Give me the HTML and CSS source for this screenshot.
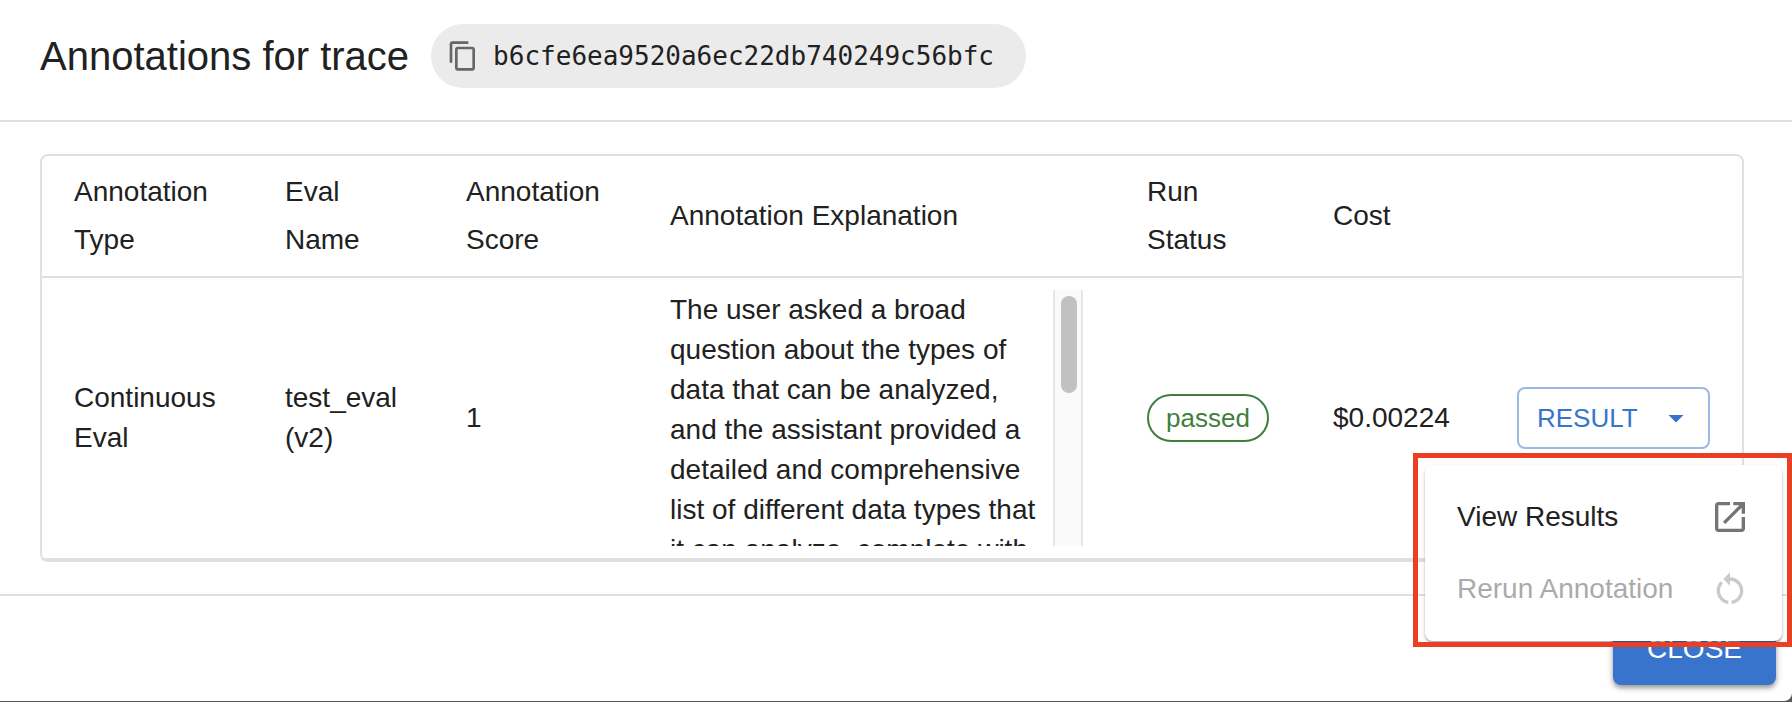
FILE: index.html
```html
<!DOCTYPE html>
<html lang="en">
<head>
    <meta charset="UTF-8">
    <meta name="viewport" content="width=device-width, initial-scale=1.0">
    <title>Annotations for trace</title>
    <link rel="stylesheet" href="styles.css">
</head>
<body>
    <div class="dialog" role="dialog" aria-labelledby="dialog-title">
        <header class="dialog-header">
            <h1 class="dialog-title" id="dialog-title">Annotations for trace</h1>
            <button class="trace-id" type="button">
                <svg class="copy-icon" viewBox="0 0 24 24" aria-hidden="true"><path d="M16 1H4c-1.1 0-2 .9-2 2v14h2V3h12V1zm3 4H8c-1.1 0-2 .9-2 2v14c0 1.1.9 2 2 2h11c1.1 0 2-.9 2-2V7c0-1.1-.9-2-2-2zm0 16H8V7h11v14z"/></svg>
                <span>b6cfe6ea9520a6ec22db740249c56bfc</span>
            </button>
        </header>

        <main class="dialog-content">
            <div class="table-box">
                <table class="annotations">
                    <colgroup>
                        <col class="col-type">
                        <col class="col-eval">
                        <col class="col-score">
                        <col>
                        <col class="col-status">
                        <col class="col-cost">
                        <col class="col-action">
                    </colgroup>
                    <thead>
                        <tr>
                            <th>Annotation Type</th>
                            <th>Eval<br>Name</th>
                            <th>Annotation Score</th>
                            <th>Annotation Explanation</th>
                            <th>Run<br>Status</th>
                            <th>Cost</th>
                            <th></th>
                        </tr>
                    </thead>
                    <tbody>
                        <tr>
                            <td>Continuous Eval</td>
                            <td>test_eval (v2)</td>
                            <td>1</td>
                            <td>
                                <div class="explanation">
                                    <p class="explanation-text">The user asked a broad question about the types of data that can be analyzed, and the assistant provided a detailed and comprehensive list of different data types that it can analyze, complete with</p>
                                    <div class="scroll-track"><div class="scroll-thumb"></div></div>
                                </div>
                            </td>
                            <td><span class="chip">passed</span></td>
                            <td>$0.00224</td>
                            <td>
                                <div class="action">
                                    <button class="result-button" type="button" aria-haspopup="menu" aria-expanded="true">
                                        RESULT
                                        <svg class="caret-icon" viewBox="0 0 24 24" aria-hidden="true"><path d="M7 10l5 5 5-5z"/></svg>
                                    </button>
                                    <div class="menu-frame">
                                        <div class="menu" role="menu">
                                            <button class="menu-item" type="button" role="menuitem">
                                                View Results
                                                <svg class="menu-icon" viewBox="0 0 24 24" aria-hidden="true"><path d="M19 19H5V5h7V3H5c-1.11 0-2 .9-2 2v14c0 1.1.89 2 2 2h14c1.1 0 2-.9 2-2v-7h-2v7zM14 3v2h3.59l-9.83 9.83 1.41 1.41L19 6.41V10h2V3h-7z"/></svg>
                                            </button>
                                            <button class="menu-item" type="button" role="menuitem" disabled>
                                                Rerun Annotation
                                                <svg class="menu-icon" viewBox="0 0 24 24" aria-hidden="true"><path d="M12 5V2L8 6l4 4V7c3.31 0 6 2.69 6 6 0 2.97-2.17 5.43-5 5.91v2.02c3.95-.49 7-3.85 7-7.93 0-4.42-3.58-8-8-8zm-6 8c0-1.65.67-3.15 1.76-4.24L6.34 7.34C4.9 8.79 4 10.79 4 13c0 4.08 3.05 7.44 7 7.93v-2.02c-2.83-.48-5-2.94-5-5.91z"/></svg>
                                            </button>
                                        </div>
                                    </div>
                                </div>
                            </td>
                        </tr>
                    </tbody>
                </table>
            </div>
        </main>

        <footer class="dialog-actions">
            <button class="close-button" type="button">CLOSE</button>
        </footer>
    </div>
</body>
</html>
```
FILE: styles.css
```css
*, *::before, *::after {
    box-sizing: border-box;
}
body {
    margin: 0;
    background-color: #575757;
    color: #212121;
    font-family: "Liberation Sans", Arial, sans-serif;
    font-size: 28px;
    line-height: 40px;
}
button {
    margin: 0;
    border: 0;
    background: none;
    color: inherit;
    font: inherit;
    cursor: pointer;
}
svg {
    display: block;
    flex: none;
    fill: currentColor;
}

.dialog {
    background-color: #fff;
    border-bottom-right-radius: 8px;
}

/* header */
.dialog-header {
    display: flex;
    align-items: center;
    gap: 22px;
    padding: 24px 40px 32px;
    border-bottom: 2px solid #e0e0e0;
}
.dialog-title {
    margin: 0;
    font-size: 40px;
    font-weight: normal;
    line-height: 64px;
}
.trace-id {
    display: flex;
    align-items: center;
    gap: 14px;
    height: 64px;
    padding: 0 32px 0 16px;
    border-radius: 32px;
    background-color: #ebebeb;
    font-family: "DejaVu Sans Mono", monospace;
    font-size: 26px;
}
.copy-icon {
    width: 32px;
    height: 32px;
    color: #666;
}

/* table */
.dialog-content {
    padding: 32px 48px 32px 40px;
}
.table-box {
    border: 2px solid #e0e0e0;
    border-radius: 8px;
}
.annotations {
    width: 100%;
    border-collapse: separate;
    border-spacing: 0;
    table-layout: fixed;
}
.annotations th,
.annotations td {
    padding: 12px 32px;
    border-bottom: 2px solid #e0e0e0;
    text-align: left;
    vertical-align: middle;
}
.annotations th {
    font-weight: normal;
    line-height: 48px;
}
.col-type {
    width: 211px;
}
.col-eval {
    width: 181px;
}
.col-score {
    width: 204px;
}
.col-status {
    width: 186px;
}
.col-cost {
    width: 184px;
}
.col-action {
    width: 257px;
}

.explanation {
    display: flex;
    height: 256px;
}
.explanation-text {
    flex: 1;
    margin: 0;
    padding-right: 6px;
    overflow-y: auto;
    scrollbar-width: none;
}
.scroll-track {
    width: 30px;
    padding: 6px;
    border: solid #e8e8e8;
    border-width: 0 2px;
    background-color: #fafafa;
}
.scroll-thumb {
    width: 16px;
    height: 97px;
    border-radius: 8px;
    background-color: #c1c1c1;
}

.chip {
    display: inline-block;
    height: 48px;
    padding: 0 17px;
    border: 2px solid #3f7f3b;
    border-radius: 24px;
    color: #3f7f3b;
    font-size: 26px;
    line-height: 44px;
    vertical-align: middle;
}

.action {
    position: relative;
}
.result-button {
    display: flex;
    align-items: center;
    justify-content: space-between;
    width: 100%;
    height: 62px;
    padding: 0 14px 0 18px;
    border: 2px solid #9bb9e5;
    border-radius: 8px;
    color: #3874cb;
    font-size: 26px;
}
.caret-icon {
    width: 36px;
    height: 36px;
}

/* drop-down menu with its red frame */
.menu-frame {
    position: absolute;
    top: 66px;
    right: -82px;
    z-index: 1;
    padding: 12px 10px 6px 12px;
}
.menu-frame::after {
    content: "";
    position: absolute;
    inset: 0;
    border: 5px solid #e94025;
    pointer-events: none;
}
.menu {
    width: 357px;
    padding: 16px 0;
    border-radius: 8px;
    background-color: #fff;
    box-shadow: 0 2px 2px rgba(0, 0, 0, 0.25), 0 2px 6px rgba(0, 0, 0, 0.1);
}
.menu-item {
    display: flex;
    align-items: center;
    justify-content: space-between;
    width: 100%;
    height: 72px;
    padding: 0 32px;
    white-space: nowrap;
}
.menu-item:disabled {
    opacity: 0.38;
    cursor: default;
}
.menu-icon {
    width: 40px;
    height: 40px;
    color: #757575;
}

/* footer */
.dialog-actions {
    display: flex;
    justify-content: flex-end;
    padding: 16px;
    border-top: 2px solid #e0e0e0;
}
.close-button {
    height: 73px;
    padding: 0 34px;
    border-radius: 8px;
    background-color: #3874cb;
    color: #fff;
    box-shadow: 0 3px 4px rgba(0, 0, 0, 0.3), 0 2px 8px rgba(0, 0, 0, 0.16);
}
```
